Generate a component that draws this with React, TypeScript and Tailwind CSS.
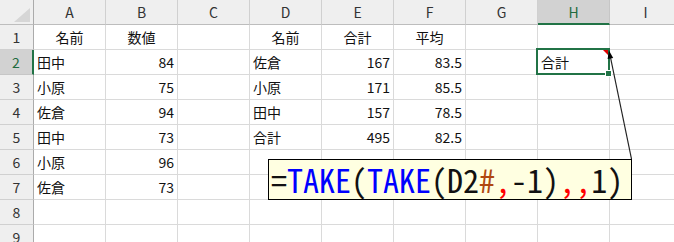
import React from "react";

const COLS = ["A", "B", "C", "D", "E", "F", "G", "H", "I"];

type Cell = { v: string; align?: "l" | "c" | "r" };

const DATA: Record<number, Record<string, Cell>> = {
  1: {
    A: { v: "名前", align: "c" },
    B: { v: "数値", align: "c" },
    D: { v: "名前", align: "c" },
    E: { v: "合計", align: "c" },
    F: { v: "平均", align: "c" },
  },
  2: { A: { v: "田中" }, B: { v: "84", align: "r" }, D: { v: "佐倉" }, E: { v: "167", align: "r" }, F: { v: "83.5", align: "r" }, H: { v: "合計" } },
  3: { A: { v: "小原" }, B: { v: "75", align: "r" }, D: { v: "小原" }, E: { v: "171", align: "r" }, F: { v: "85.5", align: "r" } },
  4: { A: { v: "佐倉" }, B: { v: "94", align: "r" }, D: { v: "田中" }, E: { v: "157", align: "r" }, F: { v: "78.5", align: "r" } },
  5: { A: { v: "田中" }, B: { v: "73", align: "r" }, D: { v: "合計" }, E: { v: "495", align: "r" }, F: { v: "82.5", align: "r" } },
  6: { A: { v: "小原" }, B: { v: "96", align: "r" } },
  7: { A: { v: "佐倉" }, B: { v: "73", align: "r" } },
};

const FORMULA: { t: string; c: string }[] = [
  { t: "=", c: "text-[#111]" },
  { t: "TAKE", c: "text-[#0000ff]" },
  { t: "(", c: "text-[#111]" },
  { t: "TAKE", c: "text-[#0000ff]" },
  { t: "(D2", c: "text-[#111]" },
  { t: "#", c: "text-[#b0470f]" },
  { t: ",", c: "text-[#ff0000]" },
  { t: "-1)", c: "text-[#111]" },
  { t: ",,", c: "text-[#ff0000]" },
  { t: "1)", c: "text-[#111]" },
];

function ColHeader({ name }: { name: string }) {
  const active = name === "H";
  return (
    <div
      className={
        active
          ? "w-[72px] shrink-0 h-[25px] flex items-center justify-center bg-[#d2d2d2] text-[#1e6b3f] border-r border-r-[#c6c6c6] border-b-2 border-b-[#217346]"
          : "w-[72px] shrink-0 h-[25px] flex items-center justify-center bg-[#efefef] text-[#333] border-r border-r-[#d0d0d0] border-b border-b-[#bdbdbd]"
      }
    >
      {name}
    </div>
  );
}

function RowHeader({ n }: { n: number }) {
  const active = n === 2;
  return (
    <div
      className={
        active
          ? "w-[34px] shrink-0 h-[25px] flex items-center justify-center bg-[#d2d2d2] text-[#1e6b3f] border-b border-b-[#c6c6c6] border-r-2 border-r-[#217346]"
          : "w-[34px] shrink-0 h-[25px] flex items-center justify-center bg-[#efefef] text-[#333] border-b border-b-[#d0d0d0] border-r border-r-[#ababab]"
      }
    >
      {n}
    </div>
  );
}

export default function App() {
  return (
    <div className="relative w-[674px] h-[242px] overflow-hidden bg-white text-[14px] leading-none font-['Noto_Sans_CJK_JP',sans-serif]">
      {/* column headers */}
      <div className="flex">
        <div className="w-[34px] shrink-0 h-[25px] bg-[#efefef] border-r border-r-[#ababab] border-b border-b-[#bdbdbd] flex items-end justify-end pr-[3px] pb-[2px]">
          <svg width="16" height="14" viewBox="0 0 16 14">
            <polygon points="16,0 16,14 0,14" fill="#d6d6d6" />
          </svg>
        </div>
        {COLS.map((c) => (
          <ColHeader key={c} name={c} />
        ))}
      </div>

      {/* rows */}
      {[1, 2, 3, 4, 5, 6, 7, 8, 9].map((r) => (
        <div key={r} className="flex">
          <RowHeader n={r} />
          {COLS.map((c) => {
            const cell = DATA[r]?.[c];
            const align =
              cell?.align === "r" ? "justify-end" : cell?.align === "c" ? "justify-center" : "justify-start";
            return (
              <div
                key={c}
                className={`w-[72px] shrink-0 h-[25px] flex items-center px-[3px] text-[#111] border-r border-b border-[#dadada] ${align}`}
              >
                {cell?.v}
              </div>
            );
          })}
        </div>
      ))}

      {/* active cell selection */}
      <div className="absolute left-[536px] top-[48px] w-[74px] h-[27px] border-2 border-[#217346]" />
      <div className="absolute left-[605px] top-[70px] w-[7px] h-[7px] bg-[#217346] border border-white" />

      <svg className="absolute left-0 top-0 pointer-events-none" width="674" height="242">
        <polygon points="603,50 608,50 608,55" fill="#e00000" />
        <line x1="610.4" y1="57" x2="631.5" y2="159" stroke="#222" strokeWidth="1.2" />
        <polygon points="609,50.5 613.2,58 607.6,59" fill="#000" />
      </svg>

      {/* formula callout */}
      <div className="absolute left-[268px] top-[159px] w-[364px] h-[41px] bg-[#ffffe1] border border-black flex items-center pl-[2px]">
        <span className="text-[32px] leading-[39px] whitespace-pre font-light font-['Noto_Sans_Mono_CJK_JP','Liberation_Mono',monospace]">
          {FORMULA.map((p, i) => (
            <span key={i} className={p.c}>
              {p.t}
            </span>
          ))}
        </span>
      </div>
    </div>
  );
}
